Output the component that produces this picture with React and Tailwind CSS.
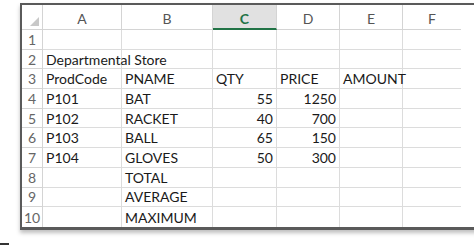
import React from 'react';

const cols = [
  { key: 'A', w: 'w-[79px]' },
  { key: 'B', w: 'w-[91px]' },
  { key: 'C', w: 'w-[64px]' },
  { key: 'D', w: 'w-[63px]' },
  { key: 'E', w: 'w-[63px]' },
  { key: 'F', w: 'w-[58px]' },
];

const rows = [
  ['', '', '', '', '', ''],
  ['Departmental Store', '', '', '', '', ''],
  ['ProdCode', 'PNAME', 'QTY', 'PRICE', 'AMOUNT', ''],
  ['P101', 'BAT', 55, 1250, '', ''],
  ['P102', 'RACKET', 40, 700, '', ''],
  ['P103', 'BALL', 65, 150, '', ''],
  ['P104', 'GLOVES', 50, 300, '', ''],
  ['', 'TOTAL', '', '', '', ''],
  ['', 'AVERAGE', '', '', '', ''],
  ['', 'MAXIMUM', '', '', '', ''],
];

export default function App() {
  return (
    <div className="w-[474px] h-[245px] bg-white overflow-hidden relative font-['Lato',sans-serif]">
      {/* Sheet frame, runs off the right edge */}
      <div className="ml-[20px] mt-[3px] w-[470px] border-t-2 border-l-2 border-b-[3px] border-[#5a5a5a] bg-white shadow-[0_3px_4px_rgba(0,0,0,0.25)]">
        {/* Column headers */}
        <div className="flex h-[25px]">
          <div className="w-[21px] border-r border-b border-[#d4d4d4] flex items-end justify-end pr-[3px] pb-[3px]">
            <div className="w-0 h-0 border-l-[9px] border-l-transparent border-b-[9px] border-b-[#c8c8c8]" />
          </div>
          {cols.map((c) => (
            <div
              key={c.key}
              className={`${c.w} flex items-center justify-center pt-[3px] text-[14px] border-[#d4d4d4] ${
                c.key === 'F' ? '' : 'border-r'
              } ${
                c.key === 'C'
                  ? 'bg-[#e1e1e1] text-[#217346] font-bold border-b-2 border-b-[#217346]'
                  : 'text-[#555] border-b'
              }`}
            >
              {c.key}
            </div>
          ))}
        </div>

        {/* Rows */}
        {rows.map((r, i) => (
          <div key={i} className="flex h-[19.7px]">
            <div
              className={`w-[21px] border-r border-[#d4d4d4] flex items-center justify-center text-[14px] text-[#666] ${
                i < rows.length - 1 ? 'border-b' : ''
              }`}
            >
              {i + 1}
            </div>
            {cols.map((c, j) => {
              const v = r[j];
              const num = typeof v === 'number';
              return (
                <div
                  key={c.key}
                  className={`${c.w} shrink-0 border-[#dcdcdc] flex items-center text-[14px] text-[#1a1a1a] whitespace-nowrap overflow-visible ${
                    num ? 'justify-end pr-[3px]' : 'pl-[3px]'
                  } ${j < cols.length - 1 ? 'border-r' : ''} ${i < rows.length - 1 ? 'border-b' : ''}`}
                >
                  <span className="relative z-10">{v}</span>
                </div>
              );
            })}
          </div>
        ))}
      </div>

      {/* stray mark bottom-left */}
      <div className="absolute left-0 bottom-0 w-[9px] h-[2px] bg-[#333]" />
    </div>
  );
}
